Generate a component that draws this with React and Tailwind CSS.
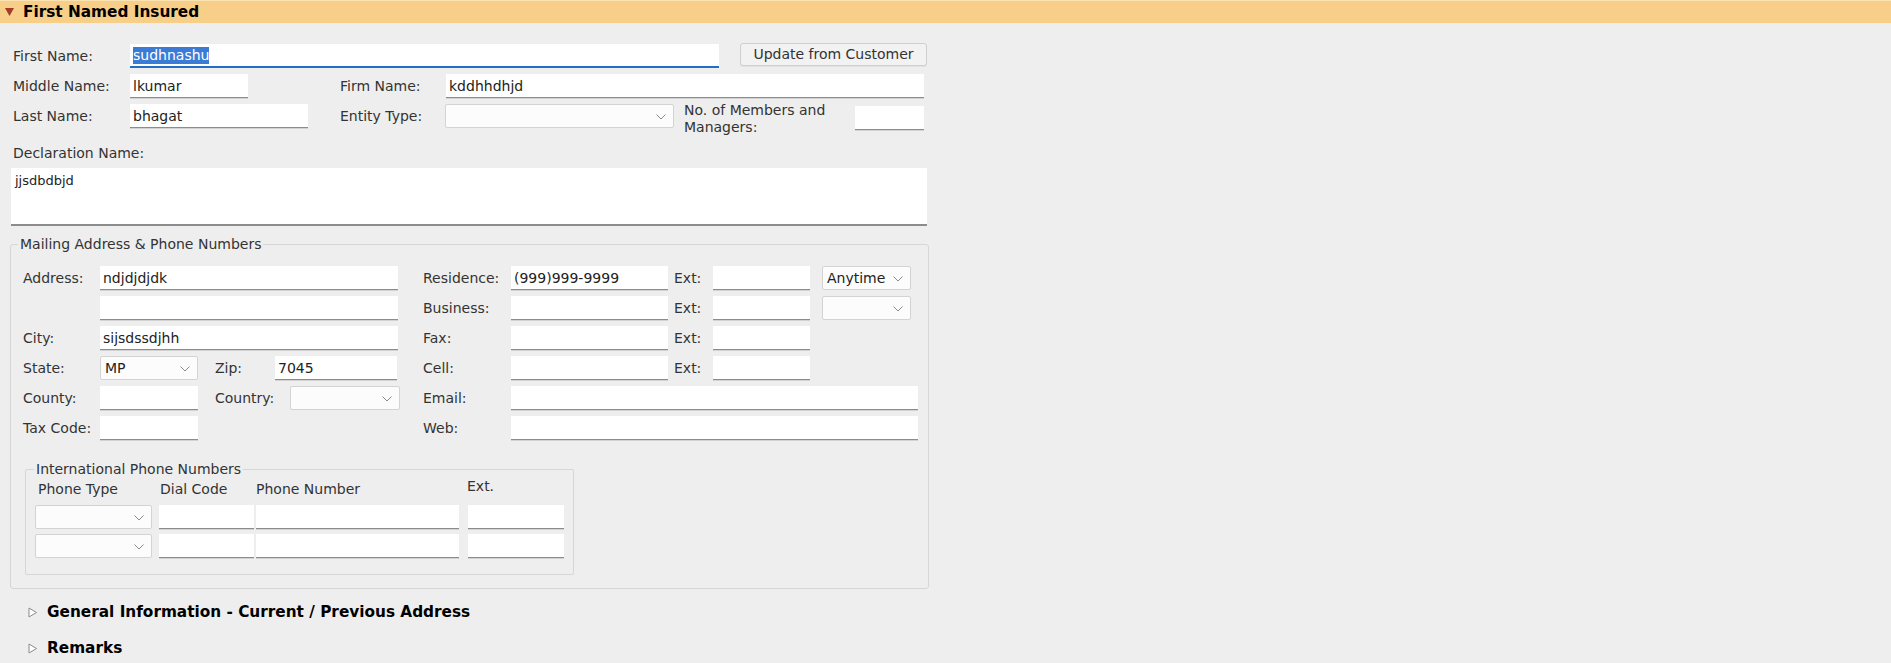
import React from "react";

// text input: white box, grey bottom edge
const Field = ({ w, value = "" }) => (
  <input
    readOnly
    value={value}
    className={`${w} h-[24px] shrink-0 bg-white border-b border-[#8c8c8c] shadow-[0_1px_0_#d2d2d2] pl-[3px] text-[14px] text-[#222] outline-none`}
  />
);

// dropdown drawn as a box with a thin chevron
const Select = ({ w, value = "" }) => (
  <div
    className={`${w} h-[24px] shrink-0 relative flex items-center bg-[#fcfcfc] border border-[#d3d3d3] rounded-[2px] pl-[4px] text-[14px] text-[#222]`}
  >
    {value}
    <svg
      className="absolute right-[7px] top-[9px]"
      width="10"
      height="6"
      viewBox="0 0 10 6"
      fill="none"
    >
      <path d="M0.5 0.5 L5 5 L9.5 0.5" stroke="#8a8a8a" strokeWidth="1" />
    </svg>
  </div>
);

const Label = ({ w, children }) => (
  <div className={`${w} shrink-0 text-[14px] text-[#333] leading-[17px]`}>{children}</div>
);

const Collapsed = ({ title }) => (
  <div className="flex items-center h-[18px] pl-[28px]">
    <svg width="10" height="11" viewBox="0 0 10 11" fill="none" className="mr-[9px]">
      <path d="M1 1 L8.5 5.5 L1 10 Z" stroke="#8a8a8a" strokeWidth="1" fill="white" />
    </svg>
    <span className="text-[15.3px] font-bold text-black">{title}</span>
  </div>
);

const AddrRow = ({ children }) => <div className="flex items-center h-[24px]">{children}</div>;

export default function App() {
  return (
    <div className="min-h-[663px] bg-[#eeeeee] font-['DejaVu_Sans',sans-serif] text-[#333]">
      {/* section header */}
      <div className="h-[23px] bg-[#f7cf88] border-t border-[#fbe3b4] flex items-center pl-[5px]">
        <svg width="9" height="8" viewBox="0 0 9 8" className="mr-[9px]">
          <path d="M0 0 L9 0 L4.5 8 Z" fill="#a33b2b" />
        </svg>
        <span className="text-[15.3px] font-bold text-black">First Named Insured</span>
      </div>

      <div className="pl-[13px] pt-[21px]">
        <div className="flex items-center h-[24px]">
          <Label w="w-[117px]">First Name:</Label>
          <div className="w-[589px] h-[24px] bg-white border-b-2 border-[#1f6fc9] flex items-center pl-[3px] text-[14px]">
            <span className="bg-[#3b7bd6] text-white leading-[17px]">sudhnashu</span>
          </div>
          <button className="ml-[21px] -mt-[3px] w-[187px] h-[23px] bg-[#f2f2f2] border border-[#cfcfcf] rounded-[3px] text-[14px] text-[#333] shadow-[0_1px_0_#e2e2e2]">
            Update from Customer
          </button>
        </div>

        <div className="flex items-center h-[24px] mt-[6px]">
          <Label w="w-[117px]">Middle Name:</Label>
          <div className="w-[210px] shrink-0">
            <Field w="w-[118px]" value="lkumar" />
          </div>
          <Label w="w-[106px]">Firm Name:</Label>
          <Field w="w-[478px]" value="kddhhdhjd" />
        </div>

        <div className="flex items-center h-[24px] mt-[6px]">
          <Label w="w-[117px]">Last Name:</Label>
          <div className="w-[210px] shrink-0">
            <Field w="w-[178px]" value="bhagat" />
          </div>
          <Label w="w-[105px]">Entity Type:</Label>
          <Select w="w-[229px]" />
          <div className="ml-[10px] w-[171px] shrink-0 text-[14px] text-[#333] leading-[17px] mt-[5px]">
            No. of Members and
            <br />
            Managers:
          </div>
          <div className="mt-[3px]">
            <Field w="w-[69px]" />
          </div>
        </div>

        <div className="mt-[17px] text-[14px] leading-[17px]">Declaration Name:</div>
        <div className="mt-[6px] -ml-[2px] w-[916px] h-[58px] bg-white border-b-2 border-[#8c8c8c] px-[4px] pt-[3px] text-[13px] text-[#222]">
          jjsdbdbjd
        </div>
      </div>

      <fieldset className="ml-[10px] mt-[10px] w-[919px] border border-[#d6d6d6] rounded-[3px] pl-[12px] pb-[13px]">
        <legend className="-ml-[5px] px-[2px] text-[14px] leading-[17px] text-[#333]">
          Mailing Address &amp; Phone Numbers
        </legend>

        <div className="flex mt-[13px]">
          {/* address column */}
          <div className="w-[400px] shrink-0 flex flex-col gap-[6px]">
            <AddrRow>
              <Label w="w-[77px]">Address:</Label>
              <Field w="w-[298px]" value="ndjdjdjdk" />
            </AddrRow>
            <AddrRow>
              <div className="w-[77px] shrink-0" />
              <Field w="w-[298px]" />
            </AddrRow>
            <AddrRow>
              <Label w="w-[77px]">City:</Label>
              <Field w="w-[298px]" value="sijsdssdjhh" />
            </AddrRow>
            <AddrRow>
              <Label w="w-[77px]">State:</Label>
              <Select w="w-[98px]" value="MP" />
              <div className="ml-[17px] w-[60px] shrink-0 text-[14px]">Zip:</div>
              <Field w="w-[122px]" value="7045" />
            </AddrRow>
            <AddrRow>
              <Label w="w-[77px]">County:</Label>
              <Field w="w-[98px]" />
              <div className="ml-[17px] w-[75px] shrink-0 text-[14px]">Country:</div>
              <Select w="w-[110px]" />
            </AddrRow>
            <AddrRow>
              <Label w="w-[77px]">Tax Code:</Label>
              <Field w="w-[98px]" />
            </AddrRow>
          </div>

          {/* phone column */}
          <div className="flex flex-col gap-[6px]">
            <AddrRow>
              <Label w="w-[88px]">Residence:</Label>
              <Field w="w-[157px]" value="(999)999-9999" />
              <div className="ml-[6px] w-[39px] shrink-0 text-[14px]">Ext:</div>
              <Field w="w-[97px]" />
              <div className="ml-[12px]">
                <Select w="w-[89px]" value="Anytime" />
              </div>
            </AddrRow>
            <AddrRow>
              <Label w="w-[88px]">Business:</Label>
              <Field w="w-[157px]" />
              <div className="ml-[6px] w-[39px] shrink-0 text-[14px]">Ext:</div>
              <Field w="w-[97px]" />
              <div className="ml-[12px]">
                <Select w="w-[89px]" />
              </div>
            </AddrRow>
            <AddrRow>
              <Label w="w-[88px]">Fax:</Label>
              <Field w="w-[157px]" />
              <div className="ml-[6px] w-[39px] shrink-0 text-[14px]">Ext:</div>
              <Field w="w-[97px]" />
            </AddrRow>
            <AddrRow>
              <Label w="w-[88px]">Cell:</Label>
              <Field w="w-[157px]" />
              <div className="ml-[6px] w-[39px] shrink-0 text-[14px]">Ext:</div>
              <Field w="w-[97px]" />
            </AddrRow>
            <AddrRow>
              <Label w="w-[88px]">Email:</Label>
              <Field w="w-[407px]" />
            </AddrRow>
            <AddrRow>
              <Label w="w-[88px]">Web:</Label>
              <Field w="w-[407px]" />
            </AddrRow>
          </div>
        </div>

        <fieldset className="ml-[2px] mt-[21px] w-[549px] border border-[#d6d6d6] rounded-[2px] pl-[9px] pb-[16px]">
          <legend className="-ml-[1px] px-[2px] text-[14px] leading-[17px] text-[#333]">
            International Phone Numbers
          </legend>
          <div className="flex h-[22px] items-center text-[14px] text-[#333]">
            <div className="w-[125px] shrink-0 pl-[3px]">Phone Type</div>
            <div className="w-[96px] shrink-0">Dial Code</div>
            <div className="w-[211px] shrink-0">Phone Number</div>
            <div className="-mt-[5px]">Ext.</div>
          </div>
          {[0, 1].map((i) => (
            <div key={i} className="flex items-center h-[24px] mt-[5px]">
              <Select w="w-[117px]" />
              <div className="ml-[7px]">
                <Field w="w-[95px]" />
              </div>
              <div className="ml-[2px]">
                <Field w="w-[203px]" />
              </div>
              <div className="ml-[9px]">
                <Field w="w-[96px]" />
              </div>
            </div>
          ))}
        </fieldset>
      </fieldset>

      <div className="mt-[14px] flex flex-col gap-[18px]">
        <Collapsed title="General Information - Current / Previous Address" />
        <Collapsed title="Remarks" />
      </div>
    </div>
  );
}
